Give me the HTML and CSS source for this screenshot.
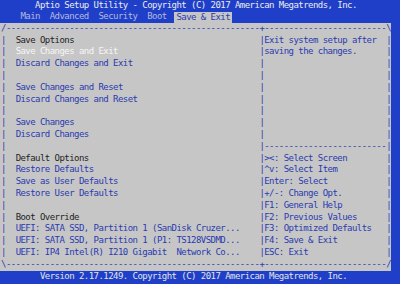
FILE: index.html
```html
<!DOCTYPE html>
<html lang="en">
<head>
    <meta charset="UTF-8">
    <meta name="viewport" content="width=device-width, initial-scale=1.0">
    <title>Aptio Setup Utility - Save &amp; Exit</title>
    <link rel="stylesheet" href="styles.css">
</head>
<body>
    <div class="screen">
        <div class="top">       Aptio Setup Utility - Copyright (C) 2017 American Megatrends, Inc.</div>
        <div class="top tabs">    Main  Advanced  Security  Boot  <span class="tab-on">Save &amp; Exit</span></div>

        <div class="panel">
            <div class="row edge"><span>/</span><span>----------------------------------------------------</span><span>+</span><span>-------------------------</span><span>\</span></div>

            <div class="row"><span>|</span><span class="l head">Save Options</span><span>|</span><span>Exit system setup after</span><span>|</span></div>
            <div class="row"><span>|</span><span class="l sel">Save Changes and Exit</span><span>|</span><span>saving the changes.</span><span>|</span></div>
            <div class="row"><span>|</span><span class="l">Discard Changes and Exit</span><span>|</span><span></span><span>|</span></div>
            <div class="row"><span>|</span><span class="l"></span><span>|</span><span></span><span>|</span></div>
            <div class="row"><span>|</span><span class="l">Save Changes and Reset</span><span>|</span><span></span><span>|</span></div>
            <div class="row"><span>|</span><span class="l">Discard Changes and Reset</span><span>|</span><span></span><span>|</span></div>
            <div class="row"><span>|</span><span class="l"></span><span>|</span><span></span><span>|</span></div>
            <div class="row"><span>|</span><span class="l">Save Changes</span><span>|</span><span></span><span>|</span></div>
            <div class="row"><span>|</span><span class="l">Discard Changes</span><span>|</span><span></span><span>|</span></div>
            <div class="row"><span>|</span><span class="l"></span><span>|</span><span>-------------------------</span><span>|</span></div>
            <div class="row"><span>|</span><span class="l head">Default Options</span><span>|</span><span>&gt;&lt;: Select Screen</span><span>|</span></div>
            <div class="row"><span>|</span><span class="l">Restore Defaults</span><span>|</span><span>^v: Select Item</span><span>|</span></div>
            <div class="row"><span>|</span><span class="l">Save as User Defaults</span><span>|</span><span>Enter: Select</span><span>|</span></div>
            <div class="row"><span>|</span><span class="l">Restore User Defaults</span><span>|</span><span>+/-: Change Opt.</span><span>|</span></div>
            <div class="row"><span>|</span><span class="l"></span><span>|</span><span>F1: General Help</span><span>|</span></div>
            <div class="row"><span>|</span><span class="l head">Boot Override</span><span>|</span><span>F2: Previous Values</span><span>|</span></div>
            <div class="row"><span>|</span><span class="l">UEFI: SATA SSD, Partition 1 (SanDisk Cruzer...</span><span>|</span><span>F3: Optimized Defaults</span><span>|</span></div>
            <div class="row"><span>|</span><span class="l">UEFI: SATA SSD, Partition 1 (P1: TS128VSDMD...</span><span>|</span><span>F4: Save &amp; Exit</span><span>|</span></div>
            <div class="row"><span>|</span><span class="l">UEFI: IP4 Intel(R) I210 Gigabit  Network Co...</span><span>|</span><span>ESC: Exit</span><span>|</span></div>

            <div class="row edge"><span>\</span><span>----------------------------------------------------</span><span>+</span><span>-------------------------</span><span>/</span></div>
        </div>

        <div class="bottom">        Version 2.17.1249. Copyright (C) 2017 American Megatrends, Inc.</div>
    </div>
</body>
</html>
```

FILE: styles.css
```css
body {
    margin: 0;
    background: #1f3fc9;
    font-family: 'DejaVu Sans Mono', monospace;
    font-size: 9px;
    letter-spacing: -0.545px;
}
.screen {
    width: 400px;
    height: 284px;
    overflow: hidden;
}
.top {
    height: 11.4px;
    line-height: 11.4px;
    padding-left: 1px;
    white-space: pre;
    color: #ececec;
}
.tabs {
    color: #b4badb;
}
.tab-on {
    display: inline-block;
    height: 10.8px;
    line-height: 10.8px;
    vertical-align: bottom;
    padding: 0 2px;
    margin: 0 -2px;
    background: #c6c6c6;
    color: #2a3ab0;
}
.panel {
    width: 391px;
    background: #c6c6c6;
    color: #2a3ab0;
}
.row {
    display: grid;
    grid-template-columns: 4.875px 253.5px 4.875px 121.875px 4.875px;
    height: 11.8px;
    line-height: 11.8px;
    padding-left: 1px;
    white-space: pre;
}
.l {
    padding-left: 9.75px;
}
.head {
    color: #1e1e1e;
}
.sel {
    color: #f6f6f6;
}
.bottom {
    height: 11.8px;
    line-height: 11.8px;
    padding-left: 1px;
    white-space: pre;
    color: #e4e4e4;
}
```
